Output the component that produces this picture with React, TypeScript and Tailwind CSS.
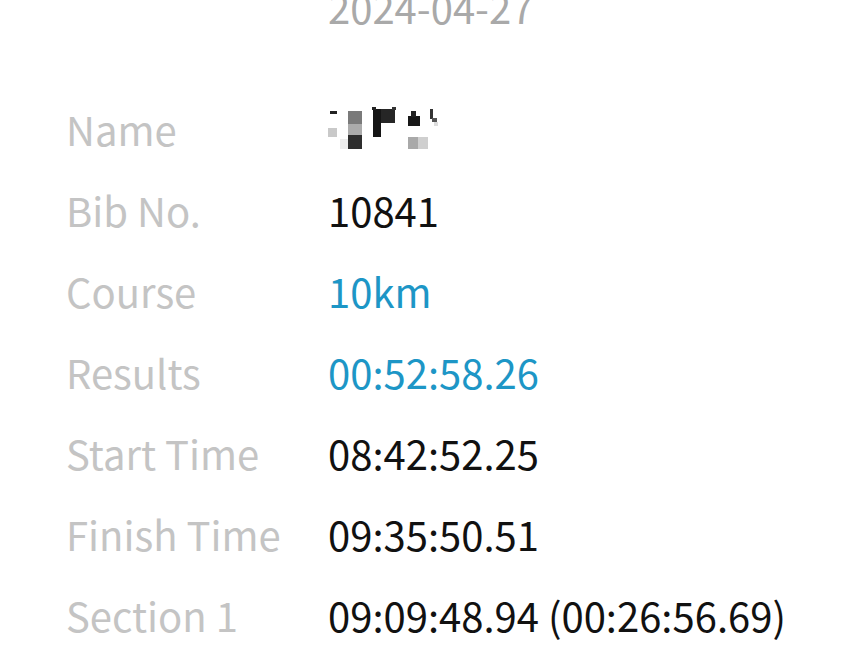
const rows: { label: string; value?: string; tone?: "blue" | "dark" }[] = [
  { label: "Name" },
  { label: "Bib No.", value: "10841", tone: "dark" },
  { label: "Course", value: "10km", tone: "blue" },
  { label: "Results", value: "00:52:58.26", tone: "blue" },
  { label: "Start Time", value: "08:42:52.25", tone: "dark" },
  { label: "Finish Time", value: "09:35:50.51", tone: "dark" },
  { label: "Section 1", value: "09:09:48.94 (00:26:56.69)", tone: "dark" },
];

// pixelated name, drawn as mosaic blocks
const Mosaic = () => (
  <svg width="112" height="56" viewBox="0 0 112 56" className="block">
    <rect x="2" y="14" width="7" height="3" fill="#222" />
    <rect x="0" y="31" width="9" height="9" fill="#c9c9c9" />
    <rect x="12" y="42" width="8" height="10" fill="#ececec" />
    <rect x="20" y="14" width="14" height="13" fill="#7a7a7a" />
    <rect x="20" y="27" width="14" height="11" fill="#ababab" />
    <rect x="20" y="38" width="14" height="14" fill="#2e2e2e" />
    <rect x="45" y="12" width="8" height="28" fill="#151515" />
    <rect x="53" y="12" width="14" height="14" fill="#262626" />
    <rect x="44" y="10" width="4" height="3" fill="#222" />
    <rect x="64" y="10" width="4" height="3" fill="#333" />
    <rect x="80" y="19" width="12" height="10" fill="#181818" />
    <rect x="83" y="14" width="5" height="6" fill="#222" />
    <rect x="80" y="40" width="10" height="12" fill="#a9a9a9" />
    <rect x="90" y="40" width="10" height="12" fill="#cfcfcf" />
    <rect x="102" y="12" width="3" height="10" fill="#333" />
    <rect x="104" y="21" width="5" height="4" fill="#555" />
    <rect x="106" y="25" width="4" height="4" fill="#ddd" />
  </svg>
);

export default function App() {
  return (
    <div
      className="w-[860px] h-[663px] overflow-hidden bg-white pl-[66px] text-[40px]"
      style={{ fontFamily: '"Noto Sans CJK JP", "Noto Sans", sans-serif' }}
    >
      <div className="-mt-[33px] pl-[262px] leading-[81px] text-[#a9a9a9]">2024-04-27</div>
      <div className="mt-[41px] flex flex-col">
        {rows.map((r) => (
          <div key={r.label} className="flex h-[81px] items-start leading-[81px]">
            <div className="w-[262px] shrink-0 text-[#c4c4c4]">{r.label}</div>
            {r.value ? (
              <div className={r.tone === "blue" ? "text-[#1d96c6]" : "text-[#111]"}>{r.value}</div>
            ) : (
              <div className="pt-[8px]">
                <Mosaic />
              </div>
            )}
          </div>
        ))}
      </div>
    </div>
  );
}
